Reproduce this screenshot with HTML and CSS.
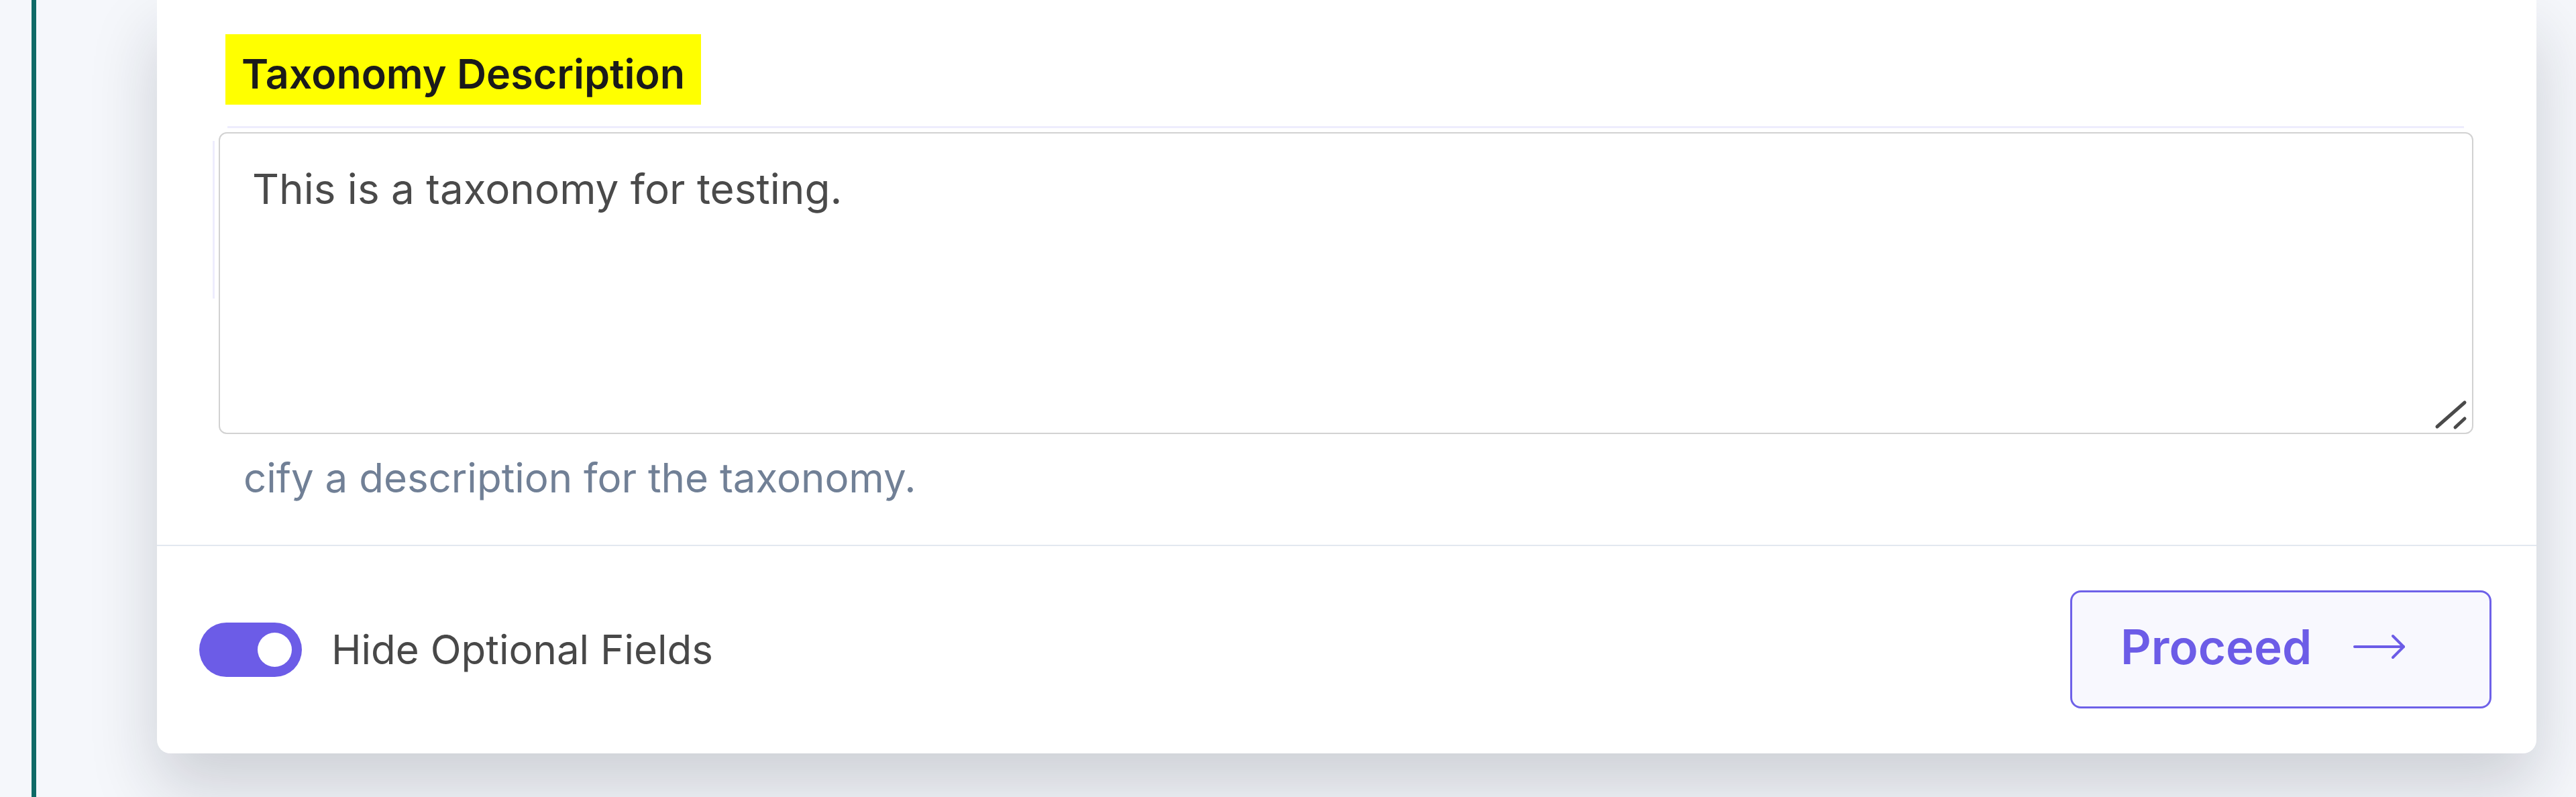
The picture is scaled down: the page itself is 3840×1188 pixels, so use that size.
FILE: index.html
```html
<!DOCTYPE html>
<html>
<head>
    <title>Create Taxonomy</title>
    <link rel="stylesheet" href="styles.css">
</head>
<body>
    <div class="page">
        <div class="rail"></div>
        <div class="main">
            <div class="card">
                <div class="form">
                    <label class="fieldLabel" for="description">Taxonomy Description</label>
                    <div class="field">
                        <textarea id="description">This is a taxonomy for testing.</textarea>
                        <!-- resize grip, drawn at the size of the screenshot -->
                        <svg class="grip" width="60" height="60" viewBox="0 0 60 60">
                            <line x1="6" y1="49" x2="47" y2="13" />
                            <line x1="33" y1="50" x2="47" y2="37" />
                        </svg>
                    </div>
                    <div class="helper">cify a description for the taxonomy.</div>
                </div>
                <div class="footer">
                    <label class="switchRow">
                        <span class="switch"><span class="knob"></span></span>
                        Hide Optional Fields
                    </label>
                    <button class="proceed">
                        Proceed
                        <svg width="78" height="44" viewBox="0 0 78 44">
                            <line x1="2" y1="22" x2="75" y2="22" />
                            <polyline points="59,6 75,22 59,38" />
                        </svg>
                    </button>
                </div>
            </div>
        </div>
    </div>
</body>
</html>
```

FILE: styles.css
```css
* {
    box-sizing: border-box;
}

html, body {
    margin: 0;
    height: 100%;
}

body {
    background: #f5f7fb;
    font-family: Inter, "Noto Sans", sans-serif;
    overflow: hidden;
}

.page {
    display: flex;
    height: 1188px;
}

.rail {
    flex: none;
    width: 54px;
    border-right: 7px solid #0f6a66;
}

.main {
    flex: 1;
    padding-left: 180px;
    padding-right: 59px;
}

.card {
    background: #fff;
    border-radius: 0 0 20px 20px;
    box-shadow: 0 50px 100px rgba(20, 25, 45, 0.18);
}

.form {
    padding: 51px 94px 52px 92px;
}

.fieldLabel {
    display: inline-block;
    margin-left: 10px;
    padding: 19px 24px 6px;
    background: #ffff00;
    color: #1a1a1a;
    font-size: 61px;
    font-weight: 600;
    line-height: 80px;
}

.field {
    position: relative;
    margin-top: 41px;
}

.field::before {
    content: "";
    position: absolute;
    top: -9px;
    left: 13px;
    right: 14px;
    height: 3px;
    background: #eeedfd;
}

.field::after {
    content: "";
    position: absolute;
    top: 13px;
    left: -9px;
    width: 3px;
    height: 235px;
    background: #eeedfd;
}

.field textarea {
    display: block;
    width: 100%;
    height: 450px;
    padding: 35px 48px;
    border: 2px solid #d2d2d2;
    border-radius: 12px;
    font-family: inherit;
    font-size: 62px;
    line-height: 96px;
    color: #4a4a4a;
    resize: none;
    outline: none;
}

.grip {
    position: absolute;
    right: 0;
    bottom: 0;
    stroke: #4a4a4a;
    stroke-width: 5px;
    stroke-linecap: round;
}

.helper {
    margin-top: 17px;
    padding-left: 37px;
    font-size: 60px;
    line-height: 96px;
    color: #718096;
    white-space: nowrap;
}

.footer {
    display: flex;
    align-items: center;
    justify-content: space-between;
    border-top: 2px solid #e2e8f0;
    padding: 66px 67px 67px 63px;
}

.switchRow {
    display: flex;
    align-items: center;
    gap: 44px;
    font-size: 60px;
    color: #484848;
}

.switch {
    display: flex;
    justify-content: flex-end;
    align-items: center;
    width: 153px;
    height: 81px;
    padding: 15px;
    border-radius: 41px;
    background: #6c5ce7;
}

.knob {
    width: 51px;
    height: 51px;
    border-radius: 50%;
    background: #fff;
}

.proceed {
    display: flex;
    align-items: center;
    gap: 62px;
    width: 628px;
    height: 176px;
    padding: 0 0 8px 72px;
    border: 3px solid #6e61e8;
    border-radius: 16px;
    background: #f8f8fe;
    color: #6c5ce7;
    font-family: inherit;
    font-size: 71px;
    font-weight: 600;
}

.proceed svg {
    fill: none;
    stroke: #6c5ce7;
    stroke-width: 4px;
    stroke-linecap: round;
    stroke-linejoin: round;
}
```
